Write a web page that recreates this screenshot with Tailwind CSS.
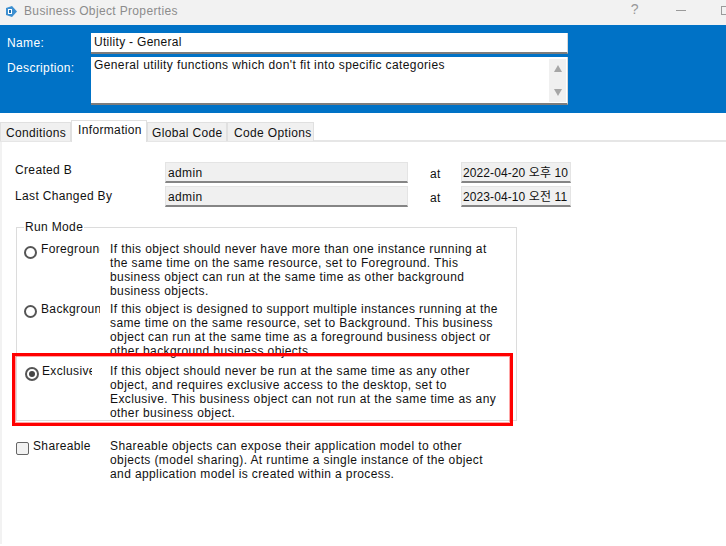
<!DOCTYPE html>
<html lang="en">
<head>
    <meta charset="UTF-8">
    <meta name="viewport" content="width=device-width, initial-scale=1.0">
    <title>Business Object Properties</title>
    <script src="https://cdn.jsdelivr.net/npm/@tailwindcss/browser@4"></script>
</head>
<body class="bg-white">
    <div class="relative w-[726px] h-[546px] overflow-hidden text-[12px] leading-[14px] tracking-[0.39px] text-[#111] font-['Liberation_Sans','Noto_Sans_CJK_KR',sans-serif]">
        <!-- Title bar -->
        <div class="h-[25px] bg-[#f2f2f2] flex items-center pl-[5px] text-[#8c8c8c]">
            <svg width="13" height="13" viewBox="0 0 13 13" class="mr-[6px] -mt-[3px]">
                <path d="M1 3 L7 1 L12 6.500 L7 12 L1 10 Z" fill="#3d8fd0"/>
                <rect x="3" y="4" width="4" height="5" fill="#fff"/>
                <rect x="4" y="5" width="2" height="3" fill="#1f6fb0"/>
            </svg>
            <span class="-mt-[4px] tracking-[0.35px]">Business Object Properties</span>
            <span class="ml-auto -mt-[7px] text-[14px] text-[#999] mr-[37px]">?</span>
            <span class="w-[10px] h-px bg-[#9a9a9a] -mt-[4px] mr-[35px]"></span>
            <span class="w-[5px] h-[9px] border-l border-y border-[#9a9a9a] -mt-[4px]"></span>
        </div>

        <!-- Name and description -->
        <div class="h-[88px] bg-[#0072c6] pt-[8px] text-white">
            <div class="flex h-[21px]">
                <div class="w-[91px] pl-[7px] pt-[3px] tracking-[0.35px]">Name:</div>
                <div class="w-[477px] bg-white border-b-2 border-b-[#7d7d7d] border-r border-r-[#d8d8d8] text-[#111] pl-[3px] pt-[2px] tracking-[0.3px]">Utility - General</div>
            </div>
            <div class="flex h-[48px] mt-[3px]">
                <div class="w-[91px] pl-[7px] pt-[4px] tracking-[0.35px]">Description:</div>
                <div class="relative w-[477px] bg-white border-b-2 border-b-[#7d7d7d] border-r border-r-[#d8d8d8] text-[#111] pl-[3px] pt-[1px]">
                    General utility functions which don't fit into specific categories
                    <div class="absolute right-[1px] top-[2px] bottom-[1px] w-[17px] bg-[#f0f0f0] flex flex-col items-center justify-between py-[6px]">
                        <span class="w-0 h-0 border-x-[4px] border-x-transparent border-b-[7px] border-b-[#a6a6a6]"></span>
                        <span class="w-0 h-0 border-x-[4px] border-x-transparent border-t-[7px] border-t-[#a6a6a6]"></span>
                    </div>
                </div>
            </div>
        </div>

        <!-- Tabs -->
        <div class="flex items-end h-[29px] border-b-2 border-b-[#e6e6e6] tracking-[0.35px]">
            <div class="w-[71px] h-[19px] bg-[#f0f0f0] border border-b-0 border-[#e0e0e0] pl-[5px] pt-[3px] -mb-px">Conditions</div>
            <div class="relative z-10 w-[76px] h-[22px] bg-white border-x border-t border-[#e0e0e0] pl-[6px] pt-[2px] -mb-[2px]">Information</div>
            <div class="w-[80px] h-[19px] bg-[#f0f0f0] border border-b-0 border-[#e0e0e0] pl-[4px] pt-[3px] -mb-px">Global Code</div>
            <div class="w-[87px] h-[19px] bg-[#f0f0f0] border border-b-0 border-[#e0e0e0] pl-[6px] pt-[3px] -mb-px">Code Options</div>
        </div>

        <!-- Information tab -->
        <div class="border-l-2 border-l-[#f2f2f2] h-[402px] pt-[20px] pl-[14px]">
            <div class="flex h-[21px] tracking-[0.35px]">
                <div class="w-[149px] -ml-px pt-[1px]">Created B</div>
                <div class="ml-px w-[243px] bg-[#f0f0f0] border border-[#e4e4e4] border-b-2 border-b-[#858585] pl-[2px] pt-[3px]">admin</div>
                <div class="w-[53px] pl-[22px] pt-[5px]">at</div>
                <div class="w-[110px] bg-[#f0f0f0] border border-[#e4e4e4] border-b-2 border-b-[#858585] pl-[1px] pt-[3px] tracking-[0.1px] whitespace-nowrap overflow-hidden">2022-04-20 오후 10</div>
            </div>
            <div class="flex h-[21px] mt-[3px] tracking-[0.35px]">
                <div class="w-[149px] -ml-px pt-[3px]">Last Changed By</div>
                <div class="ml-px w-[243px] bg-[#f0f0f0] border border-[#e4e4e4] border-b-2 border-b-[#858585] pl-[2px] pt-[3px]">admin</div>
                <div class="w-[53px] pl-[22px] pt-[5px]">at</div>
                <div class="w-[110px] bg-[#f0f0f0] border border-[#e4e4e4] border-b-2 border-b-[#858585] pl-[1px] pt-[3px] tracking-[0.1px] whitespace-nowrap overflow-hidden">2023-04-10 오전 11</div>
            </div>

            <!-- Run Mode group -->
            <div class="relative w-[501px] h-[194px] mt-[20px] border border-[#dcdcdc] pt-[14px]">
                <span class="absolute left-[7px] -top-[8px] bg-white px-[1px] tracking-[0.35px]">Run Mode</span>
                <div class="flex h-[56px]">
                    <div class="w-[93px] flex pl-[7px] tracking-[0.35px]">
                        <span class="mt-[4px] w-[13px] h-[13px] rounded-full border-2 border-[#555] bg-white shrink-0"></span>
                        <span class="ml-[4px] w-[59px] overflow-hidden whitespace-nowrap">Foreground</span>
                    </div>
                    <p class="w-[394px]">If this object should never have more than one instance running at the same time on the same resource, set to Foreground. This business object can run at the same time as other background business objects.</p>
                </div>
                <div class="flex h-[56px] mt-[4px]">
                    <div class="w-[93px] flex pl-[7px] tracking-[0.35px]">
                        <span class="mt-[3px] w-[13px] h-[13px] rounded-full border-2 border-[#555] bg-white shrink-0"></span>
                        <span class="ml-[4px] w-[59px] overflow-hidden whitespace-nowrap">Background</span>
                    </div>
                    <p class="w-[394px]">If this object is designed to support multiple instances running at the same time on the same resource, set to Background. This business object can run at the same time as a foreground business object or other background business objects.</p>
                </div>
                <div class="flex h-[56px] mt-[6px]">
                    <div class="w-[93px] flex pl-[8px] tracking-[0.35px]">
                        <span class="mt-[3px] w-[14px] h-[14px] rounded-full border-2 border-[#555] bg-white flex items-center justify-center shrink-0">
                            <span class="w-[6px] h-[6px] rounded-full bg-[#444]"></span>
                        </span>
                        <span class="ml-[3px] w-[50px] overflow-hidden whitespace-nowrap">Exclusive</span>
                    </div>
                    <p class="w-[394px]">If this object should never be run at the same time as any other object, and requires exclusive access to the desktop, set to Exclusive. This business object can not run at the same time as any other business object.</p>
                </div>
            </div>

            <!-- Shareable -->
            <div class="flex mt-[18px]">
                <div class="w-[94px] flex tracking-[0.35px]">
                    <span class="mt-[3px] w-[13px] h-[13px] rounded-[2px] border border-[#666] bg-[#f2f2f2] shrink-0"></span>
                    <span class="ml-[4px]">Shareable</span>
                </div>
                <p class="w-[390px]">Shareable objects can expose their application model to other objects (model sharing). At runtime a single instance of the object and application model is created within a process.</p>
            </div>
        </div>

        <!-- Red highlight -->
        <div class="absolute left-[12px] top-[353px] w-[501px] h-[73px] border-[3px] border-[#ff0000] shadow-[inset_0_0_0_1px_rgba(255,0,0,0.35)] pointer-events-none"></div>
    </div>
</body>
</html>
